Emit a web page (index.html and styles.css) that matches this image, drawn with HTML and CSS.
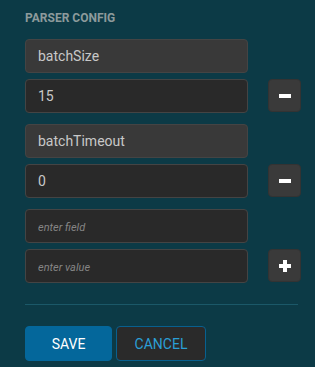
FILE: index.html
```html
<!DOCTYPE html>
<html lang="en">
<head>
    <meta charset="UTF-8">
    <meta name="viewport" content="width=device-width, initial-scale=1.0">
    <title>Parser Config</title>
    <link rel="stylesheet" href="styles.css">
</head>
<body>
    <div class="config-panel">
        <h4 class="panel-title">PARSER CONFIG</h4>

        <div class="config-pair">
            <div class="config-row">
                <input type="text" class="field-input" value="batchSize">
            </div>
            <div class="config-row">
                <input type="text" class="value-input" value="15">
                <button class="icon-btn" title="Remove">
                    <svg width="12" height="12" viewBox="0 0 12 12"><rect x="0" y="4" width="12" height="4" fill="#fff"/></svg>
                </button>
            </div>
        </div>

        <div class="config-pair">
            <div class="config-row">
                <input type="text" class="field-input" value="batchTimeout">
            </div>
            <div class="config-row">
                <input type="text" class="value-input" value="0">
                <button class="icon-btn" title="Remove">
                    <svg width="12" height="12" viewBox="0 0 12 12"><rect x="0" y="4" width="12" height="4" fill="#fff"/></svg>
                </button>
            </div>
        </div>

        <div class="config-pair">
            <div class="config-row">
                <input type="text" class="value-input" placeholder="enter field">
            </div>
            <div class="config-row">
                <input type="text" class="value-input" placeholder="enter value">
                <button class="icon-btn" title="Add">
                    <svg width="12" height="12" viewBox="0 0 12 12"><rect x="0" y="4" width="12" height="4" fill="#fff"/><rect x="4" y="0" width="4" height="12" fill="#fff"/></svg>
                </button>
            </div>
        </div>

        <hr class="divider">

        <div class="actions">
            <button class="btn btn-save">SAVE</button>
            <button class="btn btn-cancel">CANCEL</button>
        </div>
    </div>
</body>
</html>
```

FILE: styles.css
```css
body {
    margin: 0;
    background-color: #0c3a46;
    font-family: Roboto, "Liberation Sans", sans-serif;
}

.config-panel {
    padding: 10px 0 0 25px;
}

.panel-title {
    margin: 0 0 13px;
    font-size: 12px;
    line-height: 16px;
    font-weight: bold;
    color: #8d9a9c;
}

.config-pair {
    display: flex;
    flex-direction: column;
    gap: 6px;
    margin-bottom: 11px;
}

.config-row {
    display: flex;
    align-items: flex-start;
    gap: 20px;
}

.field-input,
.value-input {
    box-sizing: border-box;
    width: 223px;
    height: 34px;
    padding: 0 12px;
    border: 1px solid #444;
    border-radius: 4px;
    font-family: Roboto, "Liberation Sans", sans-serif;
    font-size: 14px;
    color: #c8c8c8;
    outline: none;
}

.field-input {
    background-color: #393939;
}

.value-input {
    background-color: #292929;
}

.value-input::placeholder {
    font-size: 11px;
    font-style: italic;
    color: #858585;
}

.icon-btn {
    box-sizing: border-box;
    width: 33px;
    height: 33px;
    padding: 0;
    border: 1px solid #333;
    border-radius: 4px;
    background-color: #3a3a3a;
    display: flex;
    align-items: center;
    justify-content: center;
    cursor: pointer;
}

.divider {
    width: 273px;
    margin: 21px 0 21px;
    border: none;
    border-top: 1px solid #1b5868;
}

.actions {
    display: flex;
    gap: 4px;
}

.btn {
    box-sizing: border-box;
    height: 35px;
    border-radius: 4px;
    font-family: Roboto, "Liberation Sans", sans-serif;
    font-size: 14px;
    cursor: pointer;
}

.btn-save {
    width: 87px;
    border: 1px solid #04679b;
    background-color: #04679b;
    color: #fff;
}

.btn-cancel {
    width: 90px;
    border: 1px solid #08608f;
    background-color: #2a2a2a;
    color: #2a9fd6;
}
```
